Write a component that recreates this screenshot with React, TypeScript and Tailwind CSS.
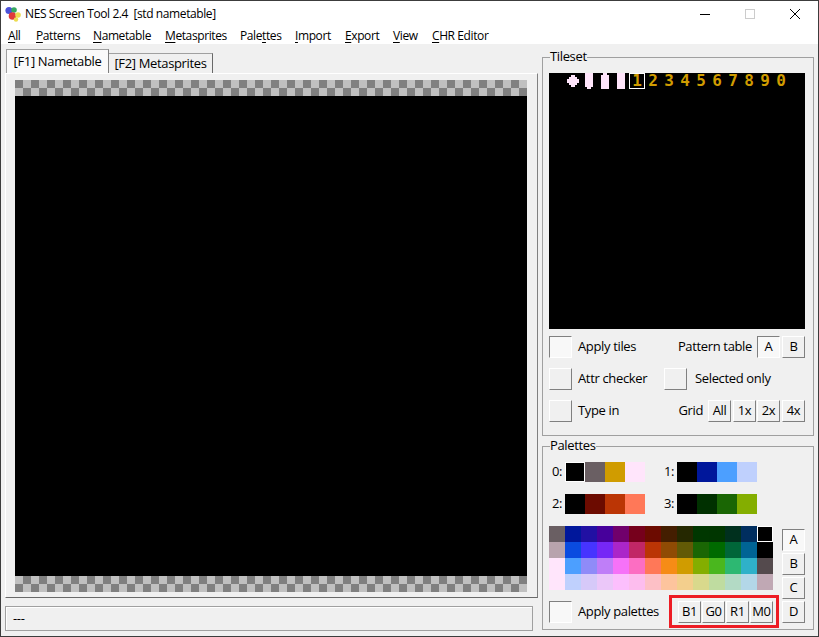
import type { ReactNode } from "react";

const FONT = "[font-family:'Open_Sans','Noto_Sans',sans-serif] text-[13px] tracking-[-0.35px]";

const tableColors = [
  ["#6a5f63", "#00179b", "#2110a3", "#47009b", "#71006c", "#76001c", "#6c0b00", "#441e00", "#252800", "#003700", "#003600", "#00301e", "#002e5f", "#000000"],
  ["#b8a3ad", "#0a4be0", "#4634ff", "#7627f6", "#ab26c9", "#c12766", "#bb3505", "#8f4b04", "#625a06", "#1a6604", "#006a00", "#006639", "#006495", "#000000"],
  ["#ffe5fb", "#4c9fff", "#8f8bf8", "#bf7ef8", "#f672f8", "#fc6ec2", "#ff7858", "#f68c16", "#d09c00", "#84ae00", "#4ab71e", "#2db872", "#2fb1c9", "#544a4d"],
  ["#ffe5fb", "#bfd0fd", "#d6c9f9", "#ebc7f9", "#fcbffd", "#fdbdee", "#fdc0c6", "#fdc49d", "#f3cf8d", "#d9d98c", "#bfdca0", "#b3dac5", "#b3d7e8", "#c0a8b4"],
];

const menus: { before: string; key: string; after: string; w: string }[] = [
  { before: "", key: "A", after: "ll", w: "w-[28px]" },
  { before: "", key: "P", after: "atterns", w: "w-[57px]" },
  { before: "", key: "N", after: "ametable", w: "w-[72px]" },
  { before: "", key: "M", after: "etasprites", w: "w-[75px]" },
  { before: "Pale", key: "t", after: "tes", w: "w-[55px]" },
  { before: "", key: "I", after: "mport", w: "w-[50px]" },
  { before: "", key: "E", after: "xport", w: "w-[48px]" },
  { before: "", key: "V", after: "iew", w: "w-[39px]" },
  { before: "", key: "C", after: "HR Editor", w: "w-[70px]" },
];

function Btn({ children, pressed, className = "" }: { children?: ReactNode; pressed?: boolean; className?: string }) {
  const look = pressed
    ? "border-t-[#808080] border-l-[#808080] border-r-white border-b-white bg-[#f8f8f8]"
    : "border-t-white border-l-white border-r-[#808080] border-b-[#808080] bg-[#f0f0f0]";
  return (
    <div className={`flex h-[22px] w-[23px] shrink-0 items-center justify-center border ${look} ${className}`}>
      {children}
    </div>
  );
}

function Swatches({ label, colors }: { label: string; colors: string[] }) {
  return (
    <div className="flex h-[20px] w-[112px] items-center">
      <span className="w-[16px] pl-[3px]">{label}</span>
      {colors.map((c, i) => (
        <div
          key={i}
          className={`h-[20px] w-[20px] ${label === "0:" && i === 0 ? "border border-white" : ""}`}
          style={{ backgroundColor: c }}
        />
      ))}
    </div>
  );
}

function Checker({ flip }: { flip?: boolean }) {
  return (
    <div
      className={`h-[16px] w-[512px] bg-[conic-gradient(#c0c0c0_25%,#808080_0_50%,#c0c0c0_0_75%,#808080_0)] bg-[length:16px_16px] ${
        flip ? "bg-[position:8px_0]" : ""
      }`}
    />
  );
}

function TilesetTop() {
  const digits = ["2", "3", "4", "5", "6", "7", "8", "9", "0"];
  const digit = "font-bold text-[#d09c00] [font-family:'DejaVu_Sans_Mono',monospace] text-[16px] tracking-normal";
  return (
    <div className="flex h-[16px]">
      <svg width="80" height="16" viewBox="0 0 80 16" className="shrink-0">
        <path d="M22 2h4v2h2v2h2v4h-2v2h-2v2h-4v-2h-2v-2h-2V6h2V4h2z" fill="#ffe5fb" />
        <path d="M36 0h8v14h-2v2h-4v-2h-2z" fill="#ffe5fb" />
        <path d="M54 0h4v2h2v14h-8V2h2z" fill="#ffe5fb" />
        <path d="M68 0h8v16h-8z" fill="#ffe5fb" />
      </svg>
      <div className={`flex h-[16px] w-[16px] items-center justify-center border border-white ${digit}`}>1</div>
      {digits.map((d, i) => (
        <div key={i} className={`flex h-[16px] w-[16px] items-center justify-center ${digit}`}>
          {d}
        </div>
      ))}
    </div>
  );
}

export default function App() {
  return (
    <div className={`flex h-[637px] w-[819px] flex-col overflow-hidden border border-[#3c3c3c] bg-[#f0f0f0] text-black ${FONT}`}>
      {/* title bar */}
      <div className="flex h-[28px] shrink-0 items-center bg-white pb-[2px] pl-[4px] text-[12px] tracking-[-0.4px]">
        <svg width="16" height="16" viewBox="0 0 16 16" className="shrink-0">
          <circle cx="4" cy="4.5" r="3.6" fill="#4a50d8" />
          <circle cx="9" cy="4" r="2.8" fill="#35a860" />
          <circle cx="7.5" cy="10" r="3.8" fill="#e03a3a" />
          <circle cx="13" cy="9" r="2.8" fill="#ecdc50" />
          <circle cx="11" cy="13.5" r="2.2" fill="#ecdc50" />
        </svg>
        <span className="ml-[4px] whitespace-pre">NES Screen Tool 2.4  [std nametable]</span>
        <div className="ml-auto flex items-center pr-[18px]">
          <div className="mr-[35px] h-px w-[10px] bg-black" />
          <div className="mr-[35px] h-[10px] w-[10px] border border-[#cccccc]" />
          <svg width="10" height="10" viewBox="0 0 10 10">
            <path d="M0 0L10 10M10 0L0 10" stroke="#000" strokeWidth="1" />
          </svg>
        </div>
      </div>

      {/* menu */}
      <div className="flex h-[15px] shrink-0 items-start bg-white pl-[7px] text-[12px] tracking-[-0.4px]">
        {menus.map((m) => (
          <span key={m.key} className={`${m.w} shrink-0 whitespace-pre leading-[14px]`}>
            {m.before}
            <span className="underline underline-offset-2">{m.key}</span>
            {m.after}
          </span>
        ))}
      </div>

      <div className="flex min-h-0 flex-1 pl-[4px] pt-[5px]">
        {/* left column */}
        <div className="flex w-[533px] shrink-0 flex-col">
          <div className="flex h-[24px] items-end pl-[1px]">
            <div className="flex h-[24px] w-[103px] items-center justify-center border border-b-0 border-[#a0a0a0] border-r-[#808080] bg-[#fafafa]">
              [F1] Nametable
            </div>
            <div className="flex h-[20px] w-[104px] items-center justify-center border border-b-0 border-l-0 border-[#a0a0a0] border-r-[#696969] bg-[#f0f0f0]">
              [F2] Metasprites
            </div>
          </div>
          <div className="flex h-[525px] flex-col border border-t-white border-l-white border-r-[#808080] border-b-[#696969] pl-[9px] pt-[6px]">
            <Checker />
            <div className="h-[480px] w-[512px] bg-black" />
            <Checker flip />
          </div>
          <div className="mr-[5px] mt-[8px] flex h-[25px] items-center border border-[#a0a0a0] pl-[7px] shadow-[inset_1px_1px_0_#fff]">
            ---
          </div>
        </div>

        {/* right column */}
        <div className="ml-[4px] flex w-[272px] shrink-0 flex-col">
          <fieldset className="h-[387px] border border-[#a0a0a0] pl-[6px] pr-[8px]">
            <legend className="ml-[1px] h-[16px] leading-[15px]">Tileset</legend>
            <div className="mt-[8px] h-[256px] w-[256px] bg-black">
              <TilesetTop />
            </div>
            <div className="mt-[7px] flex h-[22px] items-center">
              <Btn pressed />
              <span className="ml-[6px]">Apply tiles</span>
              <span className="ml-auto mr-[5px]">Pattern table</span>
              <Btn pressed>A</Btn>
              <Btn className="ml-[2px]">B</Btn>
            </div>
            <div className="mt-[10px] flex h-[22px] items-center">
              <Btn />
              <span className="ml-[6px] w-[86px]">Attr checker</span>
              <Btn />
              <span className="ml-[8px]">Selected only</span>
            </div>
            <div className="mt-[10px] flex h-[22px] items-center">
              <Btn />
              <span className="ml-[6px]">Type in</span>
              <span className="ml-auto mr-[5px]">Grid</span>
              <Btn>All</Btn>
              <Btn className="ml-[2px]">1x</Btn>
              <Btn className="ml-[1px]">2x</Btn>
              <Btn className="ml-[2px]">4x</Btn>
            </div>
          </fieldset>

          <fieldset className="mt-[2px] h-[192px] border border-[#a0a0a0] pl-[6px] pr-[8px]">
            <legend className="ml-[1px] h-[16px] leading-[15px]">Palettes</legend>
            <div className="mt-[8px] flex h-[20px]">
              <Swatches label="0:" colors={["#000000", "#6a5f63", "#d09c00", "#ffe5fb"]} />
              <Swatches label="1:" colors={["#000000", "#00179b", "#4c9fff", "#bfd0fd"]} />
            </div>
            <div className="mt-[12px] flex h-[20px]">
              <Swatches label="2:" colors={["#000000", "#6c0b00", "#bb3505", "#ff7858"]} />
              <Swatches label="3:" colors={["#000000", "#003000", "#1a6604", "#84ae00"]} />
            </div>
            <div className="mt-[12px] flex">
              <div className="w-[233px] shrink-0">
                <div className="grid w-[224px] grid-cols-[repeat(14,16px)] grid-rows-[repeat(4,16px)]">
                  {tableColors.flatMap((row, r) =>
                    row.map((c, i) => (
                      <div
                        key={`${r}-${i}`}
                        className={r === 0 && i === 13 ? "border border-white" : ""}
                        style={{ backgroundColor: c }}
                      />
                    )),
                  )}
                </div>
                <div className="mt-[5px] flex h-[33px] items-center">
                  <Btn pressed />
                  <span className="ml-[6px]">Apply palettes</span>
                  <div className="ml-auto mr-[3px] flex h-[33px] w-[110px] items-center justify-center gap-px border-[3px] border-[#ed1c24] pl-[3px]">
                    <Btn>B1</Btn>
                    <Btn>G0</Btn>
                    <Btn>R1</Btn>
                    <Btn>M0</Btn>
                  </div>
                </div>
              </div>
              <div className="mt-[3px] flex flex-col gap-[2px]">
                <Btn pressed>A</Btn>
                <Btn>B</Btn>
                <Btn>C</Btn>
                <Btn>D</Btn>
              </div>
            </div>
          </fieldset>
        </div>
      </div>
    </div>
  );
}
